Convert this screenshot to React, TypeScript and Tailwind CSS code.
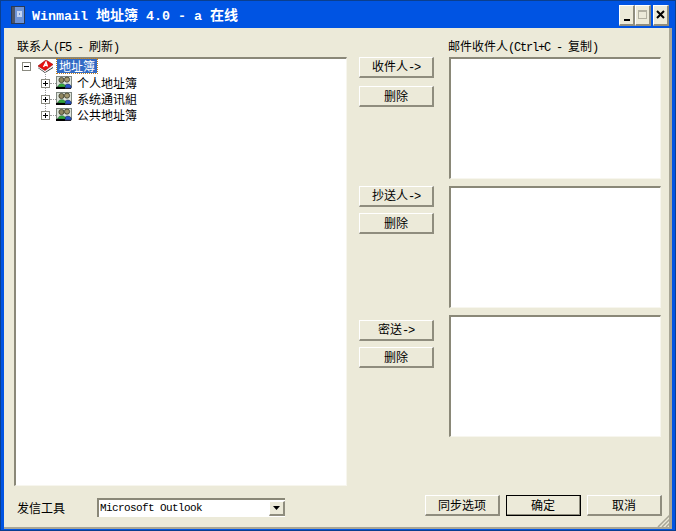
import React from "react";

function L({ children }: { children: React.ReactNode }) {
  return <span className="font-['Liberation_Mono',monospace] text-[12px] tracking-[-1.2px]">{children}</span>;
}

function Btn({ children, className = "" }: { children: React.ReactNode; className?: string }) {
  return (
    <div className={`h-[21px] flex items-center justify-center bg-[#ecead9] border-t border-l border-t-white border-l-white border-r-2 border-b-2 border-r-[#8f8d7e] border-b-[#8f8d7e] text-[12px] text-black ${className}`}>
      {children}
    </div>
  );
}

function Sunken({ className = "", children }: { className?: string; children?: React.ReactNode }) {
  return (
    <div className={`bg-white border-t-2 border-l-2 border-t-[#8a8878] border-l-[#8a8878] border-r border-b border-r-[#f7f6ee] border-b-[#f7f6ee] ${className}`}>
      {children}
    </div>
  );
}

function Book() {
  return (
    <svg width="17" height="13" viewBox="0 0 17 13" className="shrink-0">
      <path d="M1 6.5 L8 12 L16 6.5 L16 8 L8 13 L1 8 Z" fill="#333" />
      <path d="M1 6 L8 11 L16 5 L16 7 L8 12 L1 7.5 Z" fill="#f4f4f4" />
      <path d="M1 6 L9 0 L16 4.5 L8 10.5 Z" fill="#e81010" stroke="#8c0505" strokeWidth="0.6" />
      <path d="M6.5 7 L9 2 L10.5 6.5 M7.5 5.5 L10.2 5" stroke="#fff" strokeWidth="1.3" fill="none" />
    </svg>
  );
}

function Group() {
  return (
    <svg width="16" height="14" viewBox="0 0 16 14" className="shrink-0">
      <rect x="0.5" y="0.5" width="15" height="10" fill="#dfe5dc" stroke="#7f8780" />
      <circle cx="5.5" cy="4" r="2.6" fill="#8f8660" stroke="#3a3a2a" strokeWidth="0.8" />
      <circle cx="11" cy="3.6" r="2.6" fill="#a1966c" stroke="#3a3a2a" strokeWidth="0.8" />
      <path d="M8 12 C8 7 15.5 6.5 15.5 12 Z" fill="#2850c8" stroke="#123" strokeWidth="0.5" />
      <path d="M2 11 C2 6.5 9.5 6.5 9.5 11 Z" fill="#35a83c" stroke="#143" strokeWidth="0.5" />
      <rect x="0" y="11" width="9" height="2" fill="#000" />
      <rect x="9" y="12" width="6" height="1" fill="#223" />
    </svg>
  );
}

function Expander({ minus = false }: { minus?: boolean }) {
  return (
    <div className="w-[9px] h-[9px] bg-white border border-[#8a8a80] relative shrink-0">
      <div className="absolute left-[1px] right-[1px] top-[3px] h-[1px] bg-black" />
      {!minus && <div className="absolute top-[1px] bottom-[1px] left-[3px] w-[1px] bg-black" />}
    </div>
  );
}

function TreeRow({ text }: { text: string }) {
  return (
    <div className="h-[16px] flex items-center pl-[25px]">
      <Expander />
      <div className="w-[6px] border-t border-dotted border-[#999]" />
      <Group />
      <span className="ml-[5px] text-[12px] leading-[14px] text-black">{text}</span>
    </div>
  );
}

function SendRow({ btn, offset, gap }: { btn: React.ReactNode; offset: string; gap: string }) {
  return (
    <div className="flex">
      <div className={`w-[75px] flex flex-col ${gap} ${offset}`}>
        <Btn>{btn}</Btn>
        <Btn>删除</Btn>
      </div>
      <Sunken className="ml-[15px] w-[212px] h-[122px]" />
    </div>
  );
}

export default function App() {
  return (
    <div className="w-[676px] h-[531px] bg-[#0054e3] relative overflow-hidden font-['Noto_Sans_CJK_SC','Liberation_Sans',sans-serif] pt-[1px] px-[3px] pb-[1px] border border-[#0a3f8f]">
      {/* Title bar */}
      <div className="h-[26px] flex items-center pl-[7px] pr-[3px] bg-[#0054e3]">
        <svg width="14" height="18" viewBox="0 0 14 18" className="shrink-0">
          <rect x="0" y="0" width="14" height="18" fill="#2a3a55" />
          <rect x="1" y="1" width="3" height="16" fill="#4c5468" />
          <rect x="4" y="1" width="9" height="16" fill="#6e94d8" />
          <rect x="6" y="5" width="5" height="6" fill="#c4d4f2" />
          <rect x="8" y="7" width="1" height="2" fill="#6e94d8" />
        </svg>
        <div className="ml-[7px] text-white font-bold whitespace-pre text-[14px] leading-none flex-1">
          <span className="font-['Liberation_Mono',monospace] text-[13.33px]">Winmail </span>
          地址簿
          <span className="font-['Liberation_Mono',monospace] text-[13.33px]"> 4.0 - a </span>
          在线
        </div>
        <div className="flex items-center">
          <div className="w-[16px] h-[21px] bg-[#ecead9] border-t border-l border-white border-r-2 border-b-2 border-r-[#8f8d7e] border-b-[#8f8d7e] flex items-end justify-center pb-[3px]">
            <div className="w-[6px] h-[2px] bg-black" />
          </div>
          <div className="w-[16px] h-[21px] bg-[#ecead9] border-t border-l border-white border-r-2 border-b-2 border-r-[#8f8d7e] border-b-[#8f8d7e] flex items-center justify-center">
            <div className="w-[9px] h-[9px] border border-[#b3b1a2] border-t-2" />
          </div>
          <div className="ml-[2px] w-[16px] h-[21px] bg-[#ecead9] border-t border-l border-white border-r-2 border-b-2 border-r-[#8f8d7e] border-b-[#8f8d7e] flex items-center justify-center">
            <svg width="9" height="9" viewBox="0 0 9 9">
              <path d="M1 1 L8 8 M8 1 L1 8" stroke="#000" strokeWidth="2" />
            </svg>
          </div>
        </div>
      </div>
      {/* Body */}
      <div className="h-[501px] bg-[#ecead9] border-r-[3px] border-b-[2px] border-[#a8a696] pl-[10px] pr-[7px] pt-[10px] text-black text-[12px] flex flex-col">
        <div className="flex h-[19px] leading-[16px] whitespace-pre">
          <div className="w-[345px] pl-[3px]">联系人<L>(F5 - </L>刷新<L>)</L></div>
          <div className="ml-[89px]">邮件收件人<L>(Ctrl+C - </L>复制<L>)</L></div>
        </div>
        <div className="flex">
          <Sunken className="w-[333px] h-[429px] relative">
            <div className="absolute left-[29px] top-[13px] h-[43px] w-0 border-l border-dotted border-[#999]" />
            <div className="h-[14px] mb-[2px] flex items-center pl-[6px]">
              <Expander minus />
              <div className="w-[6px]" />
              <Book />
              <span className="ml-[3px] px-[2px] h-[14px] leading-[14px] bg-[#316ac5] text-white text-[12px] outline-1 outline-dotted outline-[#c08020]">地址簿</span>
            </div>
            <TreeRow text="个人地址簿" />
            <TreeRow text="系统通讯組" />
            <TreeRow text="公共地址簿" />
          </Sunken>
          <div className="ml-[12px] flex flex-col gap-[7px]">
            <SendRow btn={<span>收件人<L>-&gt;</L></span>} offset="mt-0" gap="gap-[8px]" />
            <SendRow btn={<span>抄送人<L>-&gt;</L></span>} offset="mt-0" gap="gap-[6px]" />
            <SendRow btn={<span>密送<L>-&gt;</L></span>} offset="mt-[5px]" gap="gap-[6px]" />
          </div>
        </div>
        <div className="flex items-start mt-[9px]">
          <div className="w-[83px] pl-[3px] pt-[5px] leading-[16px]">发信工具</div>
          <div className="w-[188px] h-[19px] mt-[3px] bg-white border-t-2 border-l-2 border-t-[#8a8878] border-l-[#8a8878] flex items-center">
            <span className="font-['Liberation_Mono',monospace] text-[11px] tracking-[-0.6px] ml-[1px] flex-1 leading-none">Microsoft Outlook</span>
            <div className="w-[16px] h-[15px] bg-[#ecead9] border-t border-l border-white border-r-2 border-b-2 border-r-[#8f8d7e] border-b-[#8f8d7e] flex items-center justify-center">
              <svg width="7" height="4" viewBox="0 0 7 4"><path d="M0 0 H7 L3.5 4 Z" fill="#000" /></svg>
            </div>
          </div>
          <div className="ml-auto flex gap-[6px]">
            <Btn className="w-[75px]">同步选项</Btn>
            <Btn className="w-[75px] outline-1 outline-black -outline-offset-1">确定</Btn>
            <Btn className="w-[75px]">取消</Btn>
          </div>
        </div>
        <svg width="13" height="13" viewBox="0 0 13 13" className="absolute right-[5px] bottom-[3px]">
          <path d="M1 13 L13 1 M5 13 L13 5 M9 13 L13 9" stroke="#a8a696" strokeWidth="1.5" />
        </svg>
      </div>
    </div>
  );
}
